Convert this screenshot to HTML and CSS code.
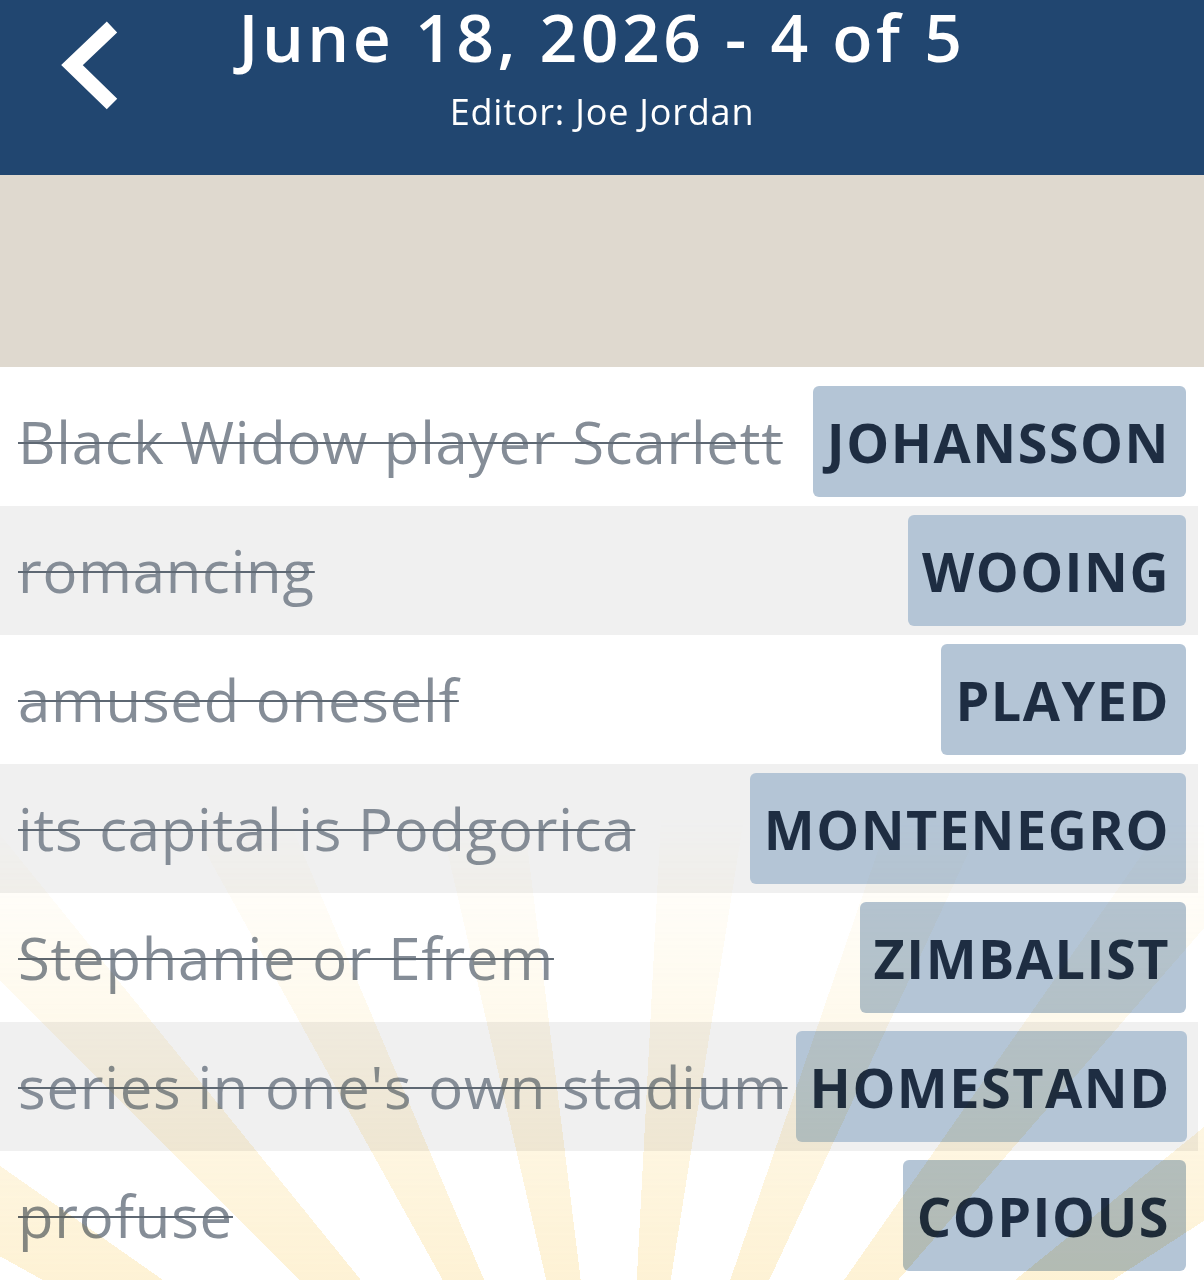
FILE: index.html
```
<!DOCTYPE html>
<html lang="en">
<head>
<meta charset="utf-8">
<title>June 18, 2026 - 4 of 5</title>
<link rel="stylesheet" href="styles.css">
</head>
<body>
<header class="topbar">
  <div class="back">
    <svg class="back-icon" width="62" height="92" viewBox="0 0 62 92" aria-hidden="true">
      <polyline points="52,7 12,45 52,84" fill="none" stroke="#ffffff" stroke-width="15" stroke-linecap="butt" stroke-linejoin="miter"/>
    </svg>
  </div>
  <div class="titles">
    <h1 class="title">June 18, 2026 - 4 of 5</h1>
    <p class="subtitle">Editor: Joe Jordan</p>
  </div>
  <div class="spacer"></div>
</header>
<div class="band"></div>
<main class="list">
  <div class="rays"></div>
  <div class="row">
    <span class="clue">Black Widow player Scarlett</span>
    <span class="answer">JOHANSSON</span>
  </div>
  <div class="row alt">
    <span class="clue">romancing</span>
    <span class="answer">WOOING</span>
  </div>
  <div class="row">
    <span class="clue">amused oneself</span>
    <span class="answer">PLAYED</span>
  </div>
  <div class="row alt">
    <span class="clue">its capital is Podgorica</span>
    <span class="answer">MONTENEGRO</span>
  </div>
  <div class="row">
    <span class="clue">Stephanie or Efrem</span>
    <span class="answer">ZIMBALIST</span>
  </div>
  <div class="row alt">
    <span class="clue">series in one's own stadium</span>
    <span class="answer">HOMESTAND</span>
  </div>
  <div class="row">
    <span class="clue">profuse</span>
    <span class="answer">COPIOUS</span>
  </div>
</main>
</body>
</html>
```
FILE: styles.css
```
* { box-sizing: border-box; }
html, body {
  margin: 0;
  padding: 0;
  background: #ffffff;
  font-family: "Open Sans", "Noto Sans", "Liberation Sans", sans-serif;
  overflow: hidden;
}
.topbar {
  height: 175px;
  background: #214670;
  display: grid;
  grid-template-columns: 1fr auto 1fr;
  align-items: start;
  color: #ffffff;
}
.back {
  padding: 20px 0 0 60px;
}
.back-icon { display: block; }
.titles {
  text-align: center;
  padding-top: 1px;
}
.title {
  margin: 0;
  font-size: 66px;
  font-weight: 600;
  line-height: 70px;
  letter-spacing: 3.5px;
}
.subtitle {
  margin: 21px 0 0;
  font-size: 36px;
  font-weight: 400;
  line-height: 40px;
  letter-spacing: 0.8px;
}
.band {
  height: 192px;
  background: #dfd9cf;
}
.list {
  position: relative;
  width: 1198px;
  padding-top: 10px;
}
.row {
  display: flex;
  align-items: center;
  justify-content: space-between;
  gap: 8px;
  height: 129px;
  padding: 9px 12px 9px 18px;
  background: #ffffff;
}
.row.alt { background: #f0f0f0; }
.clue {
  font-size: 58px;
  color: #858d97;
  text-decoration: line-through;
  text-decoration-color: #5e6873;
  text-decoration-thickness: 2px;
  white-space: nowrap;
  letter-spacing: 0.8px;
}
.answer {
  height: 111px;
  display: flex;
  align-items: center;
  padding: 0 16px 0 14px;
  background: #b4c5d6;
  border-radius: 6px;
  color: #1e2d42;
  font-size: 54px;
  font-weight: 700;
  letter-spacing: 1.5px;
  white-space: nowrap;
  flex-shrink: 0;
}
.rays {
  position: absolute;
  left: 0;
  top: 0;
  width: 1204px;
  height: 100%;
  pointer-events: none;
  z-index: 2;
  mix-blend-mode: multiply;
  background: repeating-conic-gradient(from -61deg at 620px 1233px,
    rgba(250, 212, 115, 0.3) 0deg 6deg,
    rgba(250, 212, 115, 0) 6deg 16deg);
  -webkit-mask-image: linear-gradient(to bottom, transparent 0px, transparent 450px, rgba(0,0,0,0.55) 700px, #000 913px);
  mask-image: linear-gradient(to bottom, transparent 0px, transparent 450px, rgba(0,0,0,0.55) 700px, #000 913px);
}
```
